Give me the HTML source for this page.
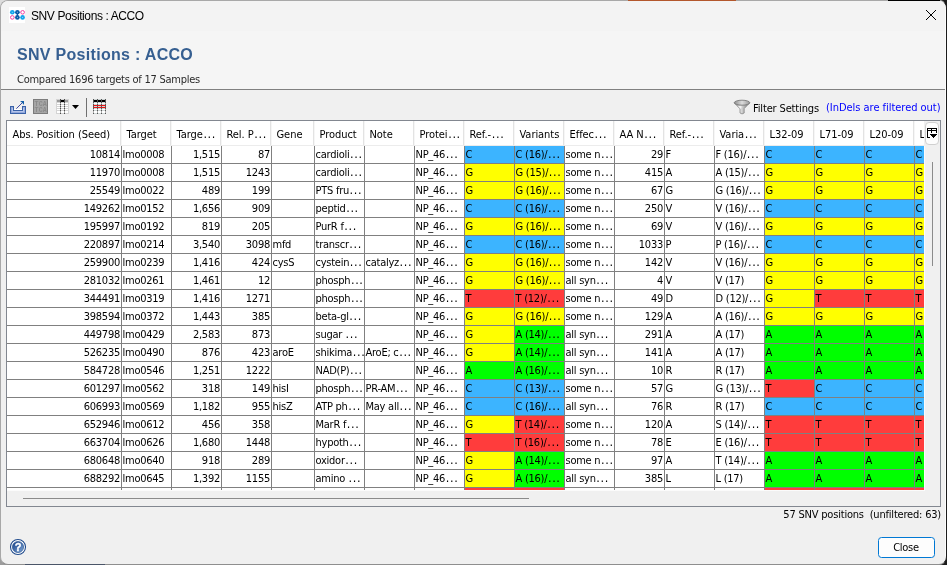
<!DOCTYPE html>
<html><head><meta charset="utf-8"><title>SNV Positions : ACCO</title>
<style>
html,body{margin:0;padding:0}
body{width:947px;height:565px;overflow:hidden;position:relative;background:#1c1c1c;font-family:"DejaVu Sans Condensed","DejaVu Sans","Liberation Sans",sans-serif;font-size:11px;letter-spacing:-0.25px;color:#000}
#bgtop{position:absolute;left:0;top:0;width:12px;height:12px;background:#dcdcdc}
#topedge{position:absolute;left:0;top:0;width:947px;height:1px;z-index:5}
#topedge b{position:absolute;top:0;height:1px;display:block}
#win{will-change:transform;position:absolute;left:0;top:0;width:945px;height:563px;background:#f0f0f0;border:1px solid #a8a8a8;border-right-color:#1c1c1c;border-bottom-color:#8e8e8e;border-radius:8px;overflow:hidden}
#in{position:absolute;left:0;top:1px;width:945px;height:562px}
#in>*{position:absolute}
#tbar{left:0;top:-1px;width:945px;height:30px;background:#f3f3f3}
#hpanel{left:0;top:29px;width:945px;height:58px;background:#f5f5f5}
#sep{left:0;top:87px;width:945px;height:1px;background:#808080}
#wtitle{left:30px;top:5px;font-family:"Liberation Sans",sans-serif;font-size:12px;letter-spacing:-0.4px;line-height:18px;white-space:pre}
#title{left:16px;top:42px;font-family:"Liberation Sans",sans-serif;font-weight:bold;font-size:16px;letter-spacing:0.3px;color:#365f91;line-height:22px;white-space:pre}
#sub{left:16px;top:71px;line-height:14px;color:#2a2a2a;white-space:pre}
#tblwrap{left:5px;top:118px;width:933px;height:385px;border:1px solid #828790;background:#f0f0f0}
#tbl{position:absolute;left:0;top:0;width:917px;height:369px;background:#fff;overflow:hidden}
#tbl>*{position:absolute}
.h{top:0;height:25px;line-height:27px;letter-spacing:-0.05px;white-space:pre;overflow:hidden}
.hs{top:0;width:2px;height:25px;background:linear-gradient(90deg,#e3e3e3 0,#e3e3e3 50%,#f6f6f6 50%)}
.c{height:17px;line-height:17px;white-space:pre;overflow:hidden;padding-left:.5px;box-sizing:border-box}
u{text-decoration:none;letter-spacing:.65px;font-size:12.5px;line-height:1px;margin-left:.6px}
.c.r{text-align:right;padding-right:1px}
.hb{left:0;top:24px;width:917px;height:1px;background:#ececec}
.hs{height:24px !important}
.hl{left:0;width:917px;height:1px;background:#808080}
.vl{top:25px;width:1px;height:344px;background:#808080}
#status{right:5px;top:506px;letter-spacing:-0.2px;line-height:14px;white-space:pre}
#closebtn{left:877px;top:535px;width:54px;height:19px;padding-right:1px;border:1px solid #0078d4;border-radius:3.5px;background:#fdfdfd;text-align:center;line-height:20px}
#filt{left:752px;top:100px;line-height:14px;letter-spacing:-0.15px;white-space:pre}
#indel{left:825px;top:99px;line-height:14px;letter-spacing:-0.03px;color:#0000ff;white-space:pre}
</style></head><body>
<div id="bgtop"></div><div style="position:absolute;left:0;top:553px;width:12px;height:12px;background:#9c9c9c"></div><div style="position:absolute;left:25px;top:564px;width:80px;height:1px;background:#4a5568;z-index:6"></div>
<div id="win"><div id="in">
<div id="tbar"></div><div style="left:944px;top:8px;width:1px;height:546px;background:#fcfcfc;z-index:3"></div><div id="hpanel"></div><div id="sep"></div>
<svg id="appicon" style="left:8px;top:5px" width="16" height="16" viewBox="0 0 16 16"><rect width="16" height="16" fill="#fff"/>
<line x1="8.4" y1="5.3" x2="8.4" y2="10.4" stroke="#0a5aa8" stroke-width="1.2"/><line x1="3.3" y1="5.3" x2="13.6" y2="5.3" stroke="#8fd0f4" stroke-width=".7"/><line x1="3.3" y1="10.4" x2="13.6" y2="10.4" stroke="#8fd0f4" stroke-width=".7"/>
<circle cx="3.3" cy="5.3" r="2.3" fill="#12a4ec"/><circle cx="8.4" cy="5.3" r="2.3" fill="#0a5aa8"/><circle cx="13.6" cy="5.3" r="1.8" fill="#fff" stroke="#f23fa2" stroke-width="1"/>
<circle cx="3.3" cy="10.4" r="1.8" fill="#fff" stroke="#f23fa2" stroke-width="1"/><circle cx="8.4" cy="10.4" r="2.3" fill="#0a5aa8"/><circle cx="13.6" cy="10.4" r="2.3" fill="#12a4ec"/>
<g fill="#fff" opacity=".55"><rect x="2.8" y="4.8" width="1" height="1"/><rect x="7.9" y="4.8" width="1" height="1"/><rect x="7.9" y="9.9" width="1" height="1"/><rect x="13.1" y="9.9" width="1" height="1"/></g></svg>
<div id="wtitle">SNV Positions : ACCO</div>
<svg style="left:924px;top:7px" width="12" height="12" viewBox="0 0 12 12"><path d="M1 1L11 11M11 1L1 11" stroke="#000" stroke-width="1" fill="none"/></svg>
<div id="title">SNV Positions : ACCO</div>
<div id="sub">Compared 1696 targets of 17 Samples</div>
<svg id="tb" style="left:0;top:93px" width="120" height="24" viewBox="1 95 120 24" shape-rendering="crispEdges">
<!-- export icon (page coords; svg origin = page (1,95)) -->
<path d="M10.5 106.5H13.5V110.5H22.5V106.5H25.5V113.5H10.5Z" fill="#93a9dc" stroke="#3a62a8" stroke-width="1"/>
<rect x="12" y="108" width="1" height="4" fill="#b4c4ea"/><rect x="12" y="111" width="12" height="1" fill="#b4c4ea"/><rect x="23" y="108" width="1" height="4" fill="#b4c4ea"/>
<rect x="14" y="109" width="8" height="1" fill="#fff"/>
<g shape-rendering="auto"><path d="M16.3 108.7L22.5 102.5" stroke="#2b3a9c" stroke-width=".9" fill="none"/>
<path d="M20 101H24V105L22.8 103.6 21.6 102.3Z" fill="#1560a8"/></g>
<!-- TCA icon -->
<rect x="33.5" y="99.5" width="14" height="14" fill="#a6a6a6" stroke="#7c7c7c"/>
<g shape-rendering="auto" font-family="'Liberation Mono',monospace" font-size="6.6" font-weight="bold" fill="#8b8b8b" letter-spacing="0.1"><text x="34.6" y="106">TCA</text><text x="34.6" y="112">TCA</text></g>
<!-- table columns icon -->
<rect x="56" y="99" width="13" height="15" fill="#d4d4d4"/>
<rect x="57" y="100" width="3" height="2" fill="#9a9a9a"/><rect x="61" y="100" width="3" height="2" fill="#000"/><rect x="65" y="100" width="3" height="2" fill="#9a9a9a"/>
<g fill="#fff"><rect x="57" y="103" width="3" height="1"/><rect x="57" y="105" width="3" height="1"/><rect x="57" y="107" width="3" height="1"/><rect x="57" y="109" width="3" height="1"/><rect x="57" y="111" width="3" height="2"/>
<rect x="61" y="103" width="3" height="1"/><rect x="61" y="105" width="3" height="1"/><rect x="61" y="107" width="3" height="1"/><rect x="61" y="109" width="3" height="1"/><rect x="61" y="111" width="3" height="2"/>
<rect x="65" y="103" width="3" height="1"/><rect x="65" y="105" width="3" height="1"/><rect x="65" y="107" width="3" height="1"/><rect x="65" y="109" width="3" height="1"/><rect x="65" y="111" width="3" height="2"/></g>
<rect x="60" y="99" width="1" height="15" fill="#4a4a4a"/><rect x="64" y="99" width="1" height="15" fill="#4a4a4a"/><g fill="#fff" opacity=".5"><rect x="60" y="103" width="5" height="1"/><rect x="60" y="105" width="5" height="1"/><rect x="60" y="107" width="5" height="1"/><rect x="60" y="109" width="5" height="1"/><rect x="60" y="111" width="5" height="2"/></g>
<path d="M72 105H79L75.5 109Z" fill="#000" shape-rendering="auto"/>
<rect x="86" y="98" width="1" height="19" fill="#707070"/>
<!-- red rows icon -->
<rect x="93" y="99" width="13" height="15" fill="#cfd6d6"/>
<rect x="94" y="100" width="3" height="2" fill="#000"/><rect x="98" y="100" width="3" height="2" fill="#000"/><rect x="102" y="100" width="3" height="2" fill="#000"/>
<g fill="#fff"><rect x="94" y="103" width="11" height="1"/><rect x="94" y="109" width="11" height="1"/><rect x="94" y="111" width="11" height="2"/></g>
<g fill="#f01010"><rect x="94" y="105" width="11" height="1"/><rect x="94" y="107" width="11" height="1"/></g>
<g fill="#555"><rect x="93" y="99" width="1" height="15"/><rect x="97" y="99" width="1" height="15"/><rect x="101" y="99" width="1" height="15"/><rect x="105" y="99" width="1" height="15"/></g><g fill="#fff" opacity=".55"><rect x="93" y="103" width="13" height="1"/><rect x="93" y="109" width="13" height="1"/><rect x="93" y="111" width="13" height="2"/></g><g fill="#f01010" opacity=".5"><rect x="93" y="105" width="13" height="1"/><rect x="93" y="107" width="13" height="1"/></g>
</svg>
<svg style="left:732px;top:97px" width="18" height="17" viewBox="733 99 18 17">
<defs><linearGradient id="fg" x1="0" x2="1" y1="0" y2="0"><stop offset="0" stop-color="#7a7a7a"/><stop offset=".4" stop-color="#e4e4e4"/><stop offset="1" stop-color="#6e6e6e"/></linearGradient>
<linearGradient id="fe" x1="0" x2="1" y1="0" y2="0"><stop offset="0" stop-color="#8e8e8e"/><stop offset=".5" stop-color="#dcdcdc"/><stop offset="1" stop-color="#9a9a9a"/></linearGradient></defs>
<path d="M734.2 102.8L740 108.8V113Q742 114.8 744.2 113V108.6L749.8 102.8Z" fill="url(#fg)" stroke="#808080" stroke-width=".7"/>
<path d="M737.5 105.6L741.6 106.4 740.8 109Z" fill="#f4f4f4" opacity=".9"/>
<ellipse cx="742" cy="102.7" rx="7.7" ry="2.5" fill="url(#fe)" stroke="#7c7c7c" stroke-width=".9"/>
</svg>

<div id="filt">Filter Settings</div><div id="indel">(InDels are filtered out)</div>
<div id="tblwrap"><div id="tbl">
<div class="h" style="left:0px;width:114px"><span style="padding-left:5.5px">Abs. Position (Seed)</span></div>
<i class="hs" style="left:113px"></i>
<div class="h" style="left:114px;width:50px"><span style="padding-left:5.5px">Target</span></div>
<i class="hs" style="left:163px"></i>
<div class="h" style="left:164px;width:50px"><span style="padding-left:5.5px">Targe<u>...</u></span></div>
<i class="hs" style="left:213px"></i>
<div class="h" style="left:214px;width:50px"><span style="padding-left:5.5px">Rel. P<u>...</u></span></div>
<i class="hs" style="left:263px"></i>
<div class="h" style="left:264px;width:43px"><span style="padding-left:5.5px">Gene</span></div>
<i class="hs" style="left:306px"></i>
<div class="h" style="left:307px;width:50px"><span style="padding-left:5.5px">Product</span></div>
<i class="hs" style="left:356px"></i>
<div class="h" style="left:357px;width:50px"><span style="padding-left:5.5px">Note</span></div>
<i class="hs" style="left:406px"></i>
<div class="h" style="left:407px;width:50px"><span style="padding-left:5.5px">Protei<u>...</u></span></div>
<i class="hs" style="left:456px"></i>
<div class="h" style="left:457px;width:50px"><span style="padding-left:5.5px">Ref.-<u>...</u></span></div>
<i class="hs" style="left:506px"></i>
<div class="h" style="left:507px;width:50px"><span style="padding-left:5.5px">Variants</span></div>
<i class="hs" style="left:556px"></i>
<div class="h" style="left:557px;width:50px"><span style="padding-left:5.5px">Effec<u>...</u></span></div>
<i class="hs" style="left:606px"></i>
<div class="h" style="left:607px;width:50px"><span style="padding-left:5.5px">AA N<u>...</u></span></div>
<i class="hs" style="left:656px"></i>
<div class="h" style="left:657px;width:50px"><span style="padding-left:5.5px">Ref.-<u>...</u></span></div>
<i class="hs" style="left:706px"></i>
<div class="h" style="left:707px;width:50px"><span style="padding-left:5.5px">Varia<u>...</u></span></div>
<i class="hs" style="left:756px"></i>
<div class="h" style="left:757px;width:50px"><span style="padding-left:5.5px">L32-09</span></div>
<i class="hs" style="left:806px"></i>
<div class="h" style="left:807px;width:50px"><span style="padding-left:5.5px">L71-09</span></div>
<i class="hs" style="left:856px"></i>
<div class="h" style="left:857px;width:50px"><span style="padding-left:5.5px">L20-09</span></div>
<i class="hs" style="left:906px"></i>
<div class="h" style="left:907px;width:10px"><span style="padding-left:5.5px">L</span></div>
<div class="c r" style="left:0px;top:25px;width:114px;">10814</div>
<div class="c" style="left:115px;top:25px;width:49px;">lmo0008</div>
<div class="c r" style="left:165px;top:25px;width:49px;">1,515</div>
<div class="c r" style="left:215px;top:25px;width:49px;">87</div>
<div class="c" style="left:308px;top:25px;width:49px;">cardioli<u>...</u></div>
<div class="c" style="left:408px;top:25px;width:49px;">NP_46<u>...</u></div>
<div class="c" style="left:458px;top:25px;width:49px;background:#3cb4ff;">C</div>
<div class="c" style="left:508px;top:25px;width:49px;background:#3cb4ff;">C (16)/<u>...</u></div>
<div class="c" style="left:558px;top:25px;width:49px;">some n<u>...</u></div>
<div class="c r" style="left:608px;top:25px;width:49px;">29</div>
<div class="c" style="left:658px;top:25px;width:49px;">F</div>
<div class="c" style="left:708px;top:25px;width:49px;">F (16)/<u>...</u></div>
<div class="c" style="left:758px;top:25px;width:49px;background:#3cb4ff;">C</div>
<div class="c" style="left:808px;top:25px;width:49px;background:#3cb4ff;">C</div>
<div class="c" style="left:858px;top:25px;width:49px;background:#3cb4ff;">C</div>
<div class="c" style="left:908px;top:25px;width:9px;background:#3cb4ff;">C</div>
<i class="hl" style="top:42px"></i>
<div class="c r" style="left:0px;top:43px;width:114px;">11970</div>
<div class="c" style="left:115px;top:43px;width:49px;">lmo0008</div>
<div class="c r" style="left:165px;top:43px;width:49px;">1,515</div>
<div class="c r" style="left:215px;top:43px;width:49px;">1243</div>
<div class="c" style="left:308px;top:43px;width:49px;">cardioli<u>...</u></div>
<div class="c" style="left:408px;top:43px;width:49px;">NP_46<u>...</u></div>
<div class="c" style="left:458px;top:43px;width:49px;background:#ffff00;">G</div>
<div class="c" style="left:508px;top:43px;width:49px;background:#ffff00;">G (15)/<u>...</u></div>
<div class="c" style="left:558px;top:43px;width:49px;">some n<u>...</u></div>
<div class="c r" style="left:608px;top:43px;width:49px;">415</div>
<div class="c" style="left:658px;top:43px;width:49px;">A</div>
<div class="c" style="left:708px;top:43px;width:49px;">A (15)/<u>...</u></div>
<div class="c" style="left:758px;top:43px;width:49px;background:#ffff00;">G</div>
<div class="c" style="left:808px;top:43px;width:49px;background:#ffff00;">G</div>
<div class="c" style="left:858px;top:43px;width:49px;background:#ffff00;">G</div>
<div class="c" style="left:908px;top:43px;width:9px;background:#ffff00;">G</div>
<i class="hl" style="top:60px"></i>
<div class="c r" style="left:0px;top:61px;width:114px;">25549</div>
<div class="c" style="left:115px;top:61px;width:49px;">lmo0022</div>
<div class="c r" style="left:165px;top:61px;width:49px;">489</div>
<div class="c r" style="left:215px;top:61px;width:49px;">199</div>
<div class="c" style="left:308px;top:61px;width:49px;">PTS fru<u>...</u></div>
<div class="c" style="left:408px;top:61px;width:49px;">NP_46<u>...</u></div>
<div class="c" style="left:458px;top:61px;width:49px;background:#ffff00;">G</div>
<div class="c" style="left:508px;top:61px;width:49px;background:#ffff00;">G (16)/<u>...</u></div>
<div class="c" style="left:558px;top:61px;width:49px;">some n<u>...</u></div>
<div class="c r" style="left:608px;top:61px;width:49px;">67</div>
<div class="c" style="left:658px;top:61px;width:49px;">G</div>
<div class="c" style="left:708px;top:61px;width:49px;">G (16)/<u>...</u></div>
<div class="c" style="left:758px;top:61px;width:49px;background:#ffff00;">G</div>
<div class="c" style="left:808px;top:61px;width:49px;background:#ffff00;">G</div>
<div class="c" style="left:858px;top:61px;width:49px;background:#ffff00;">G</div>
<div class="c" style="left:908px;top:61px;width:9px;background:#ffff00;">G</div>
<i class="hl" style="top:78px"></i>
<div class="c r" style="left:0px;top:79px;width:114px;">149262</div>
<div class="c" style="left:115px;top:79px;width:49px;">lmo0152</div>
<div class="c r" style="left:165px;top:79px;width:49px;">1,656</div>
<div class="c r" style="left:215px;top:79px;width:49px;">909</div>
<div class="c" style="left:308px;top:79px;width:49px;">peptid<u>...</u></div>
<div class="c" style="left:408px;top:79px;width:49px;">NP_46<u>...</u></div>
<div class="c" style="left:458px;top:79px;width:49px;background:#3cb4ff;">C</div>
<div class="c" style="left:508px;top:79px;width:49px;background:#3cb4ff;">C (16)/<u>...</u></div>
<div class="c" style="left:558px;top:79px;width:49px;">some n<u>...</u></div>
<div class="c r" style="left:608px;top:79px;width:49px;">250</div>
<div class="c" style="left:658px;top:79px;width:49px;">V</div>
<div class="c" style="left:708px;top:79px;width:49px;">V (16)/<u>...</u></div>
<div class="c" style="left:758px;top:79px;width:49px;background:#3cb4ff;">C</div>
<div class="c" style="left:808px;top:79px;width:49px;background:#3cb4ff;">C</div>
<div class="c" style="left:858px;top:79px;width:49px;background:#3cb4ff;">C</div>
<div class="c" style="left:908px;top:79px;width:9px;background:#3cb4ff;">C</div>
<i class="hl" style="top:96px"></i>
<div class="c r" style="left:0px;top:97px;width:114px;">195997</div>
<div class="c" style="left:115px;top:97px;width:49px;">lmo0192</div>
<div class="c r" style="left:165px;top:97px;width:49px;">819</div>
<div class="c r" style="left:215px;top:97px;width:49px;">205</div>
<div class="c" style="left:308px;top:97px;width:49px;">PurR f<u>...</u></div>
<div class="c" style="left:408px;top:97px;width:49px;">NP_46<u>...</u></div>
<div class="c" style="left:458px;top:97px;width:49px;background:#ffff00;">G</div>
<div class="c" style="left:508px;top:97px;width:49px;background:#ffff00;">G (16)/<u>...</u></div>
<div class="c" style="left:558px;top:97px;width:49px;">some n<u>...</u></div>
<div class="c r" style="left:608px;top:97px;width:49px;">69</div>
<div class="c" style="left:658px;top:97px;width:49px;">V</div>
<div class="c" style="left:708px;top:97px;width:49px;">V (16)/<u>...</u></div>
<div class="c" style="left:758px;top:97px;width:49px;background:#ffff00;">G</div>
<div class="c" style="left:808px;top:97px;width:49px;background:#ffff00;">G</div>
<div class="c" style="left:858px;top:97px;width:49px;background:#ffff00;">G</div>
<div class="c" style="left:908px;top:97px;width:9px;background:#ffff00;">G</div>
<i class="hl" style="top:114px"></i>
<div class="c r" style="left:0px;top:115px;width:114px;">220897</div>
<div class="c" style="left:115px;top:115px;width:49px;">lmo0214</div>
<div class="c r" style="left:165px;top:115px;width:49px;">3,540</div>
<div class="c r" style="left:215px;top:115px;width:49px;">3098</div>
<div class="c" style="left:265px;top:115px;width:42px;">mfd</div>
<div class="c" style="left:308px;top:115px;width:49px;">transcr<u>...</u></div>
<div class="c" style="left:408px;top:115px;width:49px;">NP_46<u>...</u></div>
<div class="c" style="left:458px;top:115px;width:49px;background:#3cb4ff;">C</div>
<div class="c" style="left:508px;top:115px;width:49px;background:#3cb4ff;">C (16)/<u>...</u></div>
<div class="c" style="left:558px;top:115px;width:49px;">some n<u>...</u></div>
<div class="c r" style="left:608px;top:115px;width:49px;">1033</div>
<div class="c" style="left:658px;top:115px;width:49px;">P</div>
<div class="c" style="left:708px;top:115px;width:49px;">P (16)/<u>...</u></div>
<div class="c" style="left:758px;top:115px;width:49px;background:#3cb4ff;">C</div>
<div class="c" style="left:808px;top:115px;width:49px;background:#3cb4ff;">C</div>
<div class="c" style="left:858px;top:115px;width:49px;background:#3cb4ff;">C</div>
<div class="c" style="left:908px;top:115px;width:9px;background:#3cb4ff;">C</div>
<i class="hl" style="top:132px"></i>
<div class="c r" style="left:0px;top:133px;width:114px;">259900</div>
<div class="c" style="left:115px;top:133px;width:49px;">lmo0239</div>
<div class="c r" style="left:165px;top:133px;width:49px;">1,416</div>
<div class="c r" style="left:215px;top:133px;width:49px;">424</div>
<div class="c" style="left:265px;top:133px;width:42px;">cysS</div>
<div class="c" style="left:308px;top:133px;width:49px;">cystein<u>...</u></div>
<div class="c" style="left:358px;top:133px;width:49px;">catalyz<u>...</u></div>
<div class="c" style="left:408px;top:133px;width:49px;">NP_46<u>...</u></div>
<div class="c" style="left:458px;top:133px;width:49px;background:#ffff00;">G</div>
<div class="c" style="left:508px;top:133px;width:49px;background:#ffff00;">G (16)/<u>...</u></div>
<div class="c" style="left:558px;top:133px;width:49px;">some n<u>...</u></div>
<div class="c r" style="left:608px;top:133px;width:49px;">142</div>
<div class="c" style="left:658px;top:133px;width:49px;">V</div>
<div class="c" style="left:708px;top:133px;width:49px;">V (16)/<u>...</u></div>
<div class="c" style="left:758px;top:133px;width:49px;background:#ffff00;">G</div>
<div class="c" style="left:808px;top:133px;width:49px;background:#ffff00;">G</div>
<div class="c" style="left:858px;top:133px;width:49px;background:#ffff00;">G</div>
<div class="c" style="left:908px;top:133px;width:9px;background:#ffff00;">G</div>
<i class="hl" style="top:150px"></i>
<div class="c r" style="left:0px;top:151px;width:114px;">281032</div>
<div class="c" style="left:115px;top:151px;width:49px;">lmo0261</div>
<div class="c r" style="left:165px;top:151px;width:49px;">1,461</div>
<div class="c r" style="left:215px;top:151px;width:49px;">12</div>
<div class="c" style="left:308px;top:151px;width:49px;">phosph<u>...</u></div>
<div class="c" style="left:408px;top:151px;width:49px;">NP_46<u>...</u></div>
<div class="c" style="left:458px;top:151px;width:49px;background:#ffff00;">G</div>
<div class="c" style="left:508px;top:151px;width:49px;background:#ffff00;">G (16)/<u>...</u></div>
<div class="c" style="left:558px;top:151px;width:49px;">all syn<u>...</u></div>
<div class="c r" style="left:608px;top:151px;width:49px;">4</div>
<div class="c" style="left:658px;top:151px;width:49px;">V</div>
<div class="c" style="left:708px;top:151px;width:49px;">V (17)</div>
<div class="c" style="left:758px;top:151px;width:49px;background:#ffff00;">G</div>
<div class="c" style="left:808px;top:151px;width:49px;background:#ffff00;">G</div>
<div class="c" style="left:858px;top:151px;width:49px;background:#ffff00;">G</div>
<div class="c" style="left:908px;top:151px;width:9px;background:#ffff00;">G</div>
<i class="hl" style="top:168px"></i>
<div class="c r" style="left:0px;top:169px;width:114px;">344491</div>
<div class="c" style="left:115px;top:169px;width:49px;">lmo0319</div>
<div class="c r" style="left:165px;top:169px;width:49px;">1,416</div>
<div class="c r" style="left:215px;top:169px;width:49px;">1271</div>
<div class="c" style="left:308px;top:169px;width:49px;">phosph<u>...</u></div>
<div class="c" style="left:408px;top:169px;width:49px;">NP_46<u>...</u></div>
<div class="c" style="left:458px;top:169px;width:49px;background:#ff3c3c;">T</div>
<div class="c" style="left:508px;top:169px;width:49px;background:#ff3c3c;">T (12)/<u>...</u></div>
<div class="c" style="left:558px;top:169px;width:49px;">some n<u>...</u></div>
<div class="c r" style="left:608px;top:169px;width:49px;">49</div>
<div class="c" style="left:658px;top:169px;width:49px;">D</div>
<div class="c" style="left:708px;top:169px;width:49px;">D (12)/<u>...</u></div>
<div class="c" style="left:758px;top:169px;width:49px;background:#ffff00;">G</div>
<div class="c" style="left:808px;top:169px;width:49px;background:#ff3c3c;">T</div>
<div class="c" style="left:858px;top:169px;width:49px;background:#ff3c3c;">T</div>
<div class="c" style="left:908px;top:169px;width:9px;background:#ff3c3c;">T</div>
<i class="hl" style="top:186px"></i>
<div class="c r" style="left:0px;top:187px;width:114px;">398594</div>
<div class="c" style="left:115px;top:187px;width:49px;">lmo0372</div>
<div class="c r" style="left:165px;top:187px;width:49px;">1,443</div>
<div class="c r" style="left:215px;top:187px;width:49px;">385</div>
<div class="c" style="left:308px;top:187px;width:49px;">beta-gl<u>...</u></div>
<div class="c" style="left:408px;top:187px;width:49px;">NP_46<u>...</u></div>
<div class="c" style="left:458px;top:187px;width:49px;background:#ffff00;">G</div>
<div class="c" style="left:508px;top:187px;width:49px;background:#ffff00;">G (16)/<u>...</u></div>
<div class="c" style="left:558px;top:187px;width:49px;">some n<u>...</u></div>
<div class="c r" style="left:608px;top:187px;width:49px;">129</div>
<div class="c" style="left:658px;top:187px;width:49px;">A</div>
<div class="c" style="left:708px;top:187px;width:49px;">A (16)/<u>...</u></div>
<div class="c" style="left:758px;top:187px;width:49px;background:#ffff00;">G</div>
<div class="c" style="left:808px;top:187px;width:49px;background:#ffff00;">G</div>
<div class="c" style="left:858px;top:187px;width:49px;background:#ffff00;">G</div>
<div class="c" style="left:908px;top:187px;width:9px;background:#ffff00;">G</div>
<i class="hl" style="top:204px"></i>
<div class="c r" style="left:0px;top:205px;width:114px;">449798</div>
<div class="c" style="left:115px;top:205px;width:49px;">lmo0429</div>
<div class="c r" style="left:165px;top:205px;width:49px;">2,583</div>
<div class="c r" style="left:215px;top:205px;width:49px;">873</div>
<div class="c" style="left:308px;top:205px;width:49px;">sugar <u>...</u></div>
<div class="c" style="left:408px;top:205px;width:49px;">NP_46<u>...</u></div>
<div class="c" style="left:458px;top:205px;width:49px;background:#ffff00;">G</div>
<div class="c" style="left:508px;top:205px;width:49px;background:#00ff00;">A (14)/<u>...</u></div>
<div class="c" style="left:558px;top:205px;width:49px;">all syn<u>...</u></div>
<div class="c r" style="left:608px;top:205px;width:49px;">291</div>
<div class="c" style="left:658px;top:205px;width:49px;">A</div>
<div class="c" style="left:708px;top:205px;width:49px;">A (17)</div>
<div class="c" style="left:758px;top:205px;width:49px;background:#00ff00;">A</div>
<div class="c" style="left:808px;top:205px;width:49px;background:#00ff00;">A</div>
<div class="c" style="left:858px;top:205px;width:49px;background:#00ff00;">A</div>
<div class="c" style="left:908px;top:205px;width:9px;background:#00ff00;">A</div>
<i class="hl" style="top:222px"></i>
<div class="c r" style="left:0px;top:223px;width:114px;">526235</div>
<div class="c" style="left:115px;top:223px;width:49px;">lmo0490</div>
<div class="c r" style="left:165px;top:223px;width:49px;">876</div>
<div class="c r" style="left:215px;top:223px;width:49px;">423</div>
<div class="c" style="left:265px;top:223px;width:42px;">aroE</div>
<div class="c" style="left:308px;top:223px;width:49px;">shikima<u>...</u></div>
<div class="c" style="left:358px;top:223px;width:49px;">AroE; c<u>...</u></div>
<div class="c" style="left:408px;top:223px;width:49px;">NP_46<u>...</u></div>
<div class="c" style="left:458px;top:223px;width:49px;background:#ffff00;">G</div>
<div class="c" style="left:508px;top:223px;width:49px;background:#00ff00;">A (14)/<u>...</u></div>
<div class="c" style="left:558px;top:223px;width:49px;">all syn<u>...</u></div>
<div class="c r" style="left:608px;top:223px;width:49px;">141</div>
<div class="c" style="left:658px;top:223px;width:49px;">A</div>
<div class="c" style="left:708px;top:223px;width:49px;">A (17)</div>
<div class="c" style="left:758px;top:223px;width:49px;background:#00ff00;">A</div>
<div class="c" style="left:808px;top:223px;width:49px;background:#00ff00;">A</div>
<div class="c" style="left:858px;top:223px;width:49px;background:#00ff00;">A</div>
<div class="c" style="left:908px;top:223px;width:9px;background:#00ff00;">A</div>
<i class="hl" style="top:240px"></i>
<div class="c r" style="left:0px;top:241px;width:114px;">584728</div>
<div class="c" style="left:115px;top:241px;width:49px;">lmo0546</div>
<div class="c r" style="left:165px;top:241px;width:49px;">1,251</div>
<div class="c r" style="left:215px;top:241px;width:49px;">1222</div>
<div class="c" style="left:308px;top:241px;width:49px;">NAD(P)<u>...</u></div>
<div class="c" style="left:408px;top:241px;width:49px;">NP_46<u>...</u></div>
<div class="c" style="left:458px;top:241px;width:49px;background:#00ff00;">A</div>
<div class="c" style="left:508px;top:241px;width:49px;background:#00ff00;">A (16)/<u>...</u></div>
<div class="c" style="left:558px;top:241px;width:49px;">all syn<u>...</u></div>
<div class="c r" style="left:608px;top:241px;width:49px;">10</div>
<div class="c" style="left:658px;top:241px;width:49px;">R</div>
<div class="c" style="left:708px;top:241px;width:49px;">R (17)</div>
<div class="c" style="left:758px;top:241px;width:49px;background:#00ff00;">A</div>
<div class="c" style="left:808px;top:241px;width:49px;background:#00ff00;">A</div>
<div class="c" style="left:858px;top:241px;width:49px;background:#00ff00;">A</div>
<div class="c" style="left:908px;top:241px;width:9px;background:#00ff00;">A</div>
<i class="hl" style="top:258px"></i>
<div class="c r" style="left:0px;top:259px;width:114px;">601297</div>
<div class="c" style="left:115px;top:259px;width:49px;">lmo0562</div>
<div class="c r" style="left:165px;top:259px;width:49px;">318</div>
<div class="c r" style="left:215px;top:259px;width:49px;">149</div>
<div class="c" style="left:265px;top:259px;width:42px;">hisI</div>
<div class="c" style="left:308px;top:259px;width:49px;">phosph<u>...</u></div>
<div class="c" style="left:358px;top:259px;width:49px;">PR-AM<u>...</u></div>
<div class="c" style="left:408px;top:259px;width:49px;">NP_46<u>...</u></div>
<div class="c" style="left:458px;top:259px;width:49px;background:#3cb4ff;">C</div>
<div class="c" style="left:508px;top:259px;width:49px;background:#3cb4ff;">C (13)/<u>...</u></div>
<div class="c" style="left:558px;top:259px;width:49px;">some n<u>...</u></div>
<div class="c r" style="left:608px;top:259px;width:49px;">57</div>
<div class="c" style="left:658px;top:259px;width:49px;">G</div>
<div class="c" style="left:708px;top:259px;width:49px;">G (13)/<u>...</u></div>
<div class="c" style="left:758px;top:259px;width:49px;background:#ff3c3c;">T</div>
<div class="c" style="left:808px;top:259px;width:49px;background:#3cb4ff;">C</div>
<div class="c" style="left:858px;top:259px;width:49px;background:#3cb4ff;">C</div>
<div class="c" style="left:908px;top:259px;width:9px;background:#3cb4ff;">C</div>
<i class="hl" style="top:276px"></i>
<div class="c r" style="left:0px;top:277px;width:114px;">606993</div>
<div class="c" style="left:115px;top:277px;width:49px;">lmo0569</div>
<div class="c r" style="left:165px;top:277px;width:49px;">1,182</div>
<div class="c r" style="left:215px;top:277px;width:49px;">955</div>
<div class="c" style="left:265px;top:277px;width:42px;">hisZ</div>
<div class="c" style="left:308px;top:277px;width:49px;">ATP ph<u>...</u></div>
<div class="c" style="left:358px;top:277px;width:49px;">May all<u>...</u></div>
<div class="c" style="left:408px;top:277px;width:49px;">NP_46<u>...</u></div>
<div class="c" style="left:458px;top:277px;width:49px;background:#3cb4ff;">C</div>
<div class="c" style="left:508px;top:277px;width:49px;background:#3cb4ff;">C (16)/<u>...</u></div>
<div class="c" style="left:558px;top:277px;width:49px;">all syn<u>...</u></div>
<div class="c r" style="left:608px;top:277px;width:49px;">76</div>
<div class="c" style="left:658px;top:277px;width:49px;">R</div>
<div class="c" style="left:708px;top:277px;width:49px;">R (17)</div>
<div class="c" style="left:758px;top:277px;width:49px;background:#3cb4ff;">C</div>
<div class="c" style="left:808px;top:277px;width:49px;background:#3cb4ff;">C</div>
<div class="c" style="left:858px;top:277px;width:49px;background:#3cb4ff;">C</div>
<div class="c" style="left:908px;top:277px;width:9px;background:#3cb4ff;">C</div>
<i class="hl" style="top:294px"></i>
<div class="c r" style="left:0px;top:295px;width:114px;">652946</div>
<div class="c" style="left:115px;top:295px;width:49px;">lmo0612</div>
<div class="c r" style="left:165px;top:295px;width:49px;">456</div>
<div class="c r" style="left:215px;top:295px;width:49px;">358</div>
<div class="c" style="left:308px;top:295px;width:49px;">MarR f<u>...</u></div>
<div class="c" style="left:408px;top:295px;width:49px;">NP_46<u>...</u></div>
<div class="c" style="left:458px;top:295px;width:49px;background:#ffff00;">G</div>
<div class="c" style="left:508px;top:295px;width:49px;background:#ff3c3c;">T (14)/<u>...</u></div>
<div class="c" style="left:558px;top:295px;width:49px;">some n<u>...</u></div>
<div class="c r" style="left:608px;top:295px;width:49px;">120</div>
<div class="c" style="left:658px;top:295px;width:49px;">A</div>
<div class="c" style="left:708px;top:295px;width:49px;">S (14)/<u>...</u></div>
<div class="c" style="left:758px;top:295px;width:49px;background:#ff3c3c;">T</div>
<div class="c" style="left:808px;top:295px;width:49px;background:#ff3c3c;">T</div>
<div class="c" style="left:858px;top:295px;width:49px;background:#ff3c3c;">T</div>
<div class="c" style="left:908px;top:295px;width:9px;background:#ff3c3c;">T</div>
<i class="hl" style="top:312px"></i>
<div class="c r" style="left:0px;top:313px;width:114px;">663704</div>
<div class="c" style="left:115px;top:313px;width:49px;">lmo0626</div>
<div class="c r" style="left:165px;top:313px;width:49px;">1,680</div>
<div class="c r" style="left:215px;top:313px;width:49px;">1448</div>
<div class="c" style="left:308px;top:313px;width:49px;">hypoth<u>...</u></div>
<div class="c" style="left:408px;top:313px;width:49px;">NP_46<u>...</u></div>
<div class="c" style="left:458px;top:313px;width:49px;background:#ff3c3c;">T</div>
<div class="c" style="left:508px;top:313px;width:49px;background:#ff3c3c;">T (16)/<u>...</u></div>
<div class="c" style="left:558px;top:313px;width:49px;">some n<u>...</u></div>
<div class="c r" style="left:608px;top:313px;width:49px;">78</div>
<div class="c" style="left:658px;top:313px;width:49px;">E</div>
<div class="c" style="left:708px;top:313px;width:49px;">E (16)/<u>...</u></div>
<div class="c" style="left:758px;top:313px;width:49px;background:#ff3c3c;">T</div>
<div class="c" style="left:808px;top:313px;width:49px;background:#ff3c3c;">T</div>
<div class="c" style="left:858px;top:313px;width:49px;background:#ff3c3c;">T</div>
<div class="c" style="left:908px;top:313px;width:9px;background:#ff3c3c;">T</div>
<i class="hl" style="top:330px"></i>
<div class="c r" style="left:0px;top:331px;width:114px;">680648</div>
<div class="c" style="left:115px;top:331px;width:49px;">lmo0640</div>
<div class="c r" style="left:165px;top:331px;width:49px;">918</div>
<div class="c r" style="left:215px;top:331px;width:49px;">289</div>
<div class="c" style="left:308px;top:331px;width:49px;">oxidor<u>...</u></div>
<div class="c" style="left:408px;top:331px;width:49px;">NP_46<u>...</u></div>
<div class="c" style="left:458px;top:331px;width:49px;background:#ffff00;">G</div>
<div class="c" style="left:508px;top:331px;width:49px;background:#00ff00;">A (14)/<u>...</u></div>
<div class="c" style="left:558px;top:331px;width:49px;">some n<u>...</u></div>
<div class="c r" style="left:608px;top:331px;width:49px;">97</div>
<div class="c" style="left:658px;top:331px;width:49px;">A</div>
<div class="c" style="left:708px;top:331px;width:49px;">T (14)/<u>...</u></div>
<div class="c" style="left:758px;top:331px;width:49px;background:#00ff00;">A</div>
<div class="c" style="left:808px;top:331px;width:49px;background:#00ff00;">A</div>
<div class="c" style="left:858px;top:331px;width:49px;background:#00ff00;">A</div>
<div class="c" style="left:908px;top:331px;width:9px;background:#00ff00;">A</div>
<i class="hl" style="top:348px"></i>
<div class="c r" style="left:0px;top:349px;width:114px;">688292</div>
<div class="c" style="left:115px;top:349px;width:49px;">lmo0645</div>
<div class="c r" style="left:165px;top:349px;width:49px;">1,392</div>
<div class="c r" style="left:215px;top:349px;width:49px;">1155</div>
<div class="c" style="left:308px;top:349px;width:49px;">amino <u>...</u></div>
<div class="c" style="left:408px;top:349px;width:49px;">NP_46<u>...</u></div>
<div class="c" style="left:458px;top:349px;width:49px;background:#ffff00;">G</div>
<div class="c" style="left:508px;top:349px;width:49px;background:#00ff00;">A (16)/<u>...</u></div>
<div class="c" style="left:558px;top:349px;width:49px;">all syn<u>...</u></div>
<div class="c r" style="left:608px;top:349px;width:49px;">385</div>
<div class="c" style="left:658px;top:349px;width:49px;">L</div>
<div class="c" style="left:708px;top:349px;width:49px;">L (17)</div>
<div class="c" style="left:758px;top:349px;width:49px;background:#00ff00;">A</div>
<div class="c" style="left:808px;top:349px;width:49px;background:#00ff00;">A</div>
<div class="c" style="left:858px;top:349px;width:49px;background:#00ff00;">A</div>
<div class="c" style="left:908px;top:349px;width:9px;background:#00ff00;">A</div>
<i class="hl" style="top:366px"></i>
<div class="c" style="left:458px;top:367px;width:49px;background:#ff3c3c;"></div>
<div class="c" style="left:508px;top:367px;width:49px;background:#ff3c3c;"></div>
<div class="c" style="left:758px;top:367px;width:49px;background:#ff3c3c;"></div>
<div class="c" style="left:808px;top:367px;width:49px;background:#ff3c3c;"></div>
<div class="c" style="left:858px;top:367px;width:49px;background:#ff3c3c;"></div>
<div class="c" style="left:908px;top:367px;width:9px;background:#ff3c3c;"></div>
<i class="hl" style="top:384px"></i>
<i class="hb"></i>
<i class="vl" style="left:114px"></i>
<i class="vl" style="left:164px"></i>
<i class="vl" style="left:214px"></i>
<i class="vl" style="left:264px"></i>
<i class="vl" style="left:307px"></i>
<i class="vl" style="left:357px"></i>
<i class="vl" style="left:407px"></i>
<i class="vl" style="left:457px"></i>
<i class="vl" style="left:507px"></i>
<i class="vl" style="left:557px"></i>
<i class="vl" style="left:607px"></i>
<i class="vl" style="left:657px"></i>
<i class="vl" style="left:707px"></i>
<i class="vl" style="left:757px"></i>
<i class="vl" style="left:807px"></i>
<i class="vl" style="left:857px"></i>
<i class="vl" style="left:907px"></i>
</div>
<div style="position:absolute;left:918px;top:1px;width:12px;height:21px;border:1px solid #d0d0d0;border-radius:4px;background:#fdfdfd"></div>
<svg style="position:absolute;left:919px;top:6px" width="12" height="12" viewBox="926 127 12 12" shape-rendering="crispEdges">
<g fill="#000"><rect x="927" y="128" width="10" height="1"/><rect x="927" y="130" width="10" height="1"/><rect x="927" y="128" width="1" height="10"/><rect x="931" y="128" width="1" height="5"/><rect x="936" y="128" width="1" height="5"/><rect x="927" y="137" width="3" height="1"/>
<rect x="930" y="134" width="7" height="1"/><rect x="931" y="135" width="5" height="1"/><rect x="932" y="136" width="3" height="1"/><rect x="933" y="137" width="1" height="1"/></g></svg>
<div style="position:absolute;left:917px;top:25px;width:1px;height:345px;background:#fbfbfb"></div><div style="position:absolute;left:0;top:369px;width:918px;height:1px;background:#fbfbfb"></div>
<div style="position:absolute;left:925px;top:41px;width:1px;height:104px;background:#8b8b8b"></div>
<div style="position:absolute;left:16px;top:377px;width:506px;height:1px;background:#8b8b8b"></div>

</div>
<div id="status">57 SNV positions  (unfiltered: 63)</div>
<svg style="left:8px;top:536px" width="18" height="18" viewBox="0 0 18 18">
<defs><linearGradient id="hg" x1="0" y1="0" x2="1" y2="1"><stop offset="0" stop-color="#153f86"/><stop offset="1" stop-color="#7fa6d6"/></linearGradient></defs>
<circle cx="9" cy="9" r="7.5" fill="#fff" stroke="#1f4a8c" stroke-width="1.1"/>
<circle cx="9" cy="9" r="5.6" fill="url(#hg)" stroke="#1f4a8c" stroke-width=".6"/>
<text x="9" y="13" text-anchor="middle" font-family="'Liberation Sans',sans-serif" font-weight="bold" font-size="11" fill="#fff" stroke="#fff" stroke-width=".35">?</text>
</svg>

<div id="closebtn">Close</div>
</div></div>
<div id="topedge"><b style="left:628px;width:108px;background:#b3572c"></b><b style="left:888px;width:52px;background:#000"></b></div>
</body></html>
